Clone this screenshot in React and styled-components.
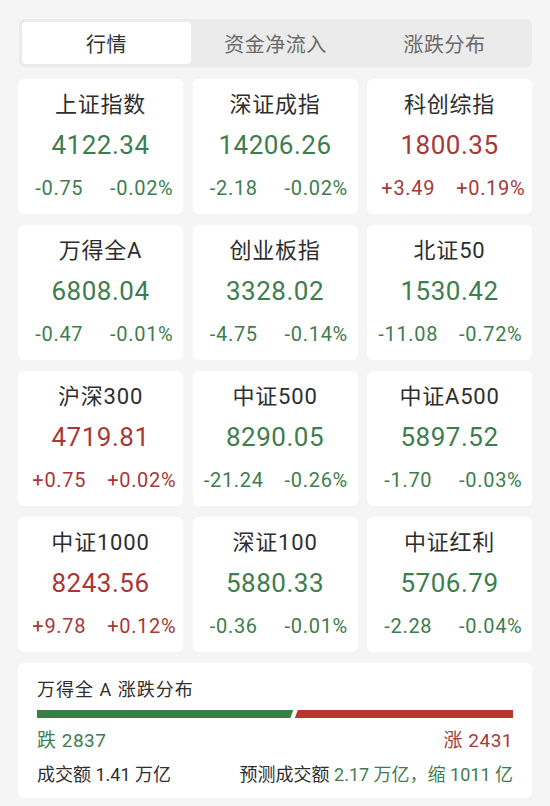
import React from "react";
import styled, { createGlobalStyle } from "styled-components";

const GREEN = "#3e7d4e";
const RED = "#a83838";

const Global = createGlobalStyle`
  html, body {
    margin: 0;
    padding: 0;
    background: #f5f5f5;
  }
  body {
    font-family: Roboto, "Noto Sans CJK SC", sans-serif;
    color: #333;
  }
`;

const Page = styled.div`
  width: 550px;
  box-sizing: border-box;
  padding: 19px 18px 8px;
`;

const TabBar = styled.div`
  display: grid;
  grid-template-columns: repeat(3, 1fr);
  height: 48px;
  box-sizing: border-box;
  padding: 3px;
  margin-left: 1px;
  background: #ebebeb;
  border-radius: 6px;
`;

const Tab = styled.div`
  display: flex;
  align-items: center;
  justify-content: center;
  font-size: 20px;
  letter-spacing: 0.5px;
  color: ${p => (p.active ? "#333" : "#6a6a6a")};
  background: ${p => (p.active ? "#fff" : "transparent")};
  border-radius: 4px;
`;

const Grid = styled.div`
  display: grid;
  grid-template-columns: repeat(3, 1fr);
  column-gap: 9.5px;
  row-gap: 11px;
  margin-top: 12px;
`;

const Card = styled.div`
  height: 135px;
  box-sizing: border-box;
  padding-top: 11px;
  background: #fff;
  border-radius: 6px;
  display: flex;
  flex-direction: column;
  align-items: stretch;
`;

const Title = styled.div`
  text-align: center;
  font-size: 22px;
  line-height: 30px;
  letter-spacing: 0.8px;
  color: #2e2e2e;
`;

const Value = styled.div`
  margin-top: 8px;
  text-align: center;
  font-size: 26px;
  line-height: 34px;
  letter-spacing: 0.5px;
  color: ${p => (p.up ? RED : GREEN)};
`;

const Changes = styled.div`
  margin-top: 14px;
  display: grid;
  grid-template-columns: 1fr 1fr;
  font-size: 20px;
  line-height: 24px;
  letter-spacing: 0.7px;
  color: ${p => (p.up ? RED : GREEN)};
`;

const Change = styled.span`
  text-align: center;
`;

const Panel = styled.div`
  margin-top: 11px;
  height: 135px;
  box-sizing: border-box;
  padding: 15px 19px 0;
  background: #fff;
  border-radius: 6px;
`;

const PanelTitle = styled.div`
  font-size: 18px;
  line-height: 24px;
  letter-spacing: 1px;
  color: #2e2e2e;
`;

const Bar = styled.div`
  display: flex;
  gap: 1.5px;
  height: 8px;
  margin-top: 8px;
`;

const Segment = styled.div`
  background: ${p => p.color};
  clip-path: ${p =>
    p.side === "left"
      ? "polygon(0 0, 100% 0, calc(100% - 3px) 100%, 0 100%)"
      : "polygon(3px 0, 100% 0, 100% 100%, 0 100%)"};
`;

const CountRow = styled.div`
  margin-top: 10px;
  display: flex;
  justify-content: space-between;
  font-size: 19px;
  line-height: 26px;
  letter-spacing: 0.5px;
`;

const Count = styled.span`
  color: ${p => (p.up ? RED : GREEN)};
`;

const VolumeRow = styled.div`
  margin-top: 9px;
  display: flex;
  justify-content: space-between;
  font-size: 18px;
  line-height: 24px;
  color: #2e2e2e;
`;

const Green = styled.span`
  color: ${GREEN};
`;

const indices = [
  ["上证指数", "4122.34", "-0.75", "-0.02%"],
  ["深证成指", "14206.26", "-2.18", "-0.02%"],
  ["科创综指", "1800.35", "+3.49", "+0.19%"],
  ["万得全A", "6808.04", "-0.47", "-0.01%"],
  ["创业板指", "3328.02", "-4.75", "-0.14%"],
  ["北证50", "1530.42", "-11.08", "-0.72%"],
  ["沪深300", "4719.81", "+0.75", "+0.02%"],
  ["中证500", "8290.05", "-21.24", "-0.26%"],
  ["中证A500", "5897.52", "-1.70", "-0.03%"],
  ["中证1000", "8243.56", "+9.78", "+0.12%"],
  ["深证100", "5880.33", "-0.36", "-0.01%"],
  ["中证红利", "5706.79", "-2.28", "-0.04%"],
];

const down = 2837;
const up = 2431;

export default function App() {
  const downShare = (down / (down + up)) * 100;
  return (
    <Page>
      <Global />
      <TabBar>
        <Tab active>行情</Tab>
        <Tab>资金净流入</Tab>
        <Tab>涨跌分布</Tab>
      </TabBar>
      <Grid>
        {indices.map(([name, value, chg, pct]) => {
          const isUp = chg.startsWith("+");
          return (
            <Card key={name}>
              <Title>{name}</Title>
              <Value up={isUp}>{value}</Value>
              <Changes up={isUp}>
                <Change>{chg}</Change>
                <Change>{pct}</Change>
              </Changes>
            </Card>
          );
        })}
      </Grid>
      <Panel>
        <PanelTitle>万得全 A 涨跌分布</PanelTitle>
        <Bar>
          <Segment side="left" color="#3a7d45" style={{ width: `${downShare}%` }} />
          <Segment side="right" color="#b8362d" style={{ flex: 1 }} />
        </Bar>
        <CountRow>
          <Count>跌 {down}</Count>
          <Count up>涨 {up}</Count>
        </CountRow>
        <VolumeRow>
          <span>成交额 1.41 万亿</span>
          <span>
            预测成交额 <Green>2.17 万亿，缩 1011 亿</Green>
          </span>
        </VolumeRow>
      </Panel>
    </Page>
  );
}
